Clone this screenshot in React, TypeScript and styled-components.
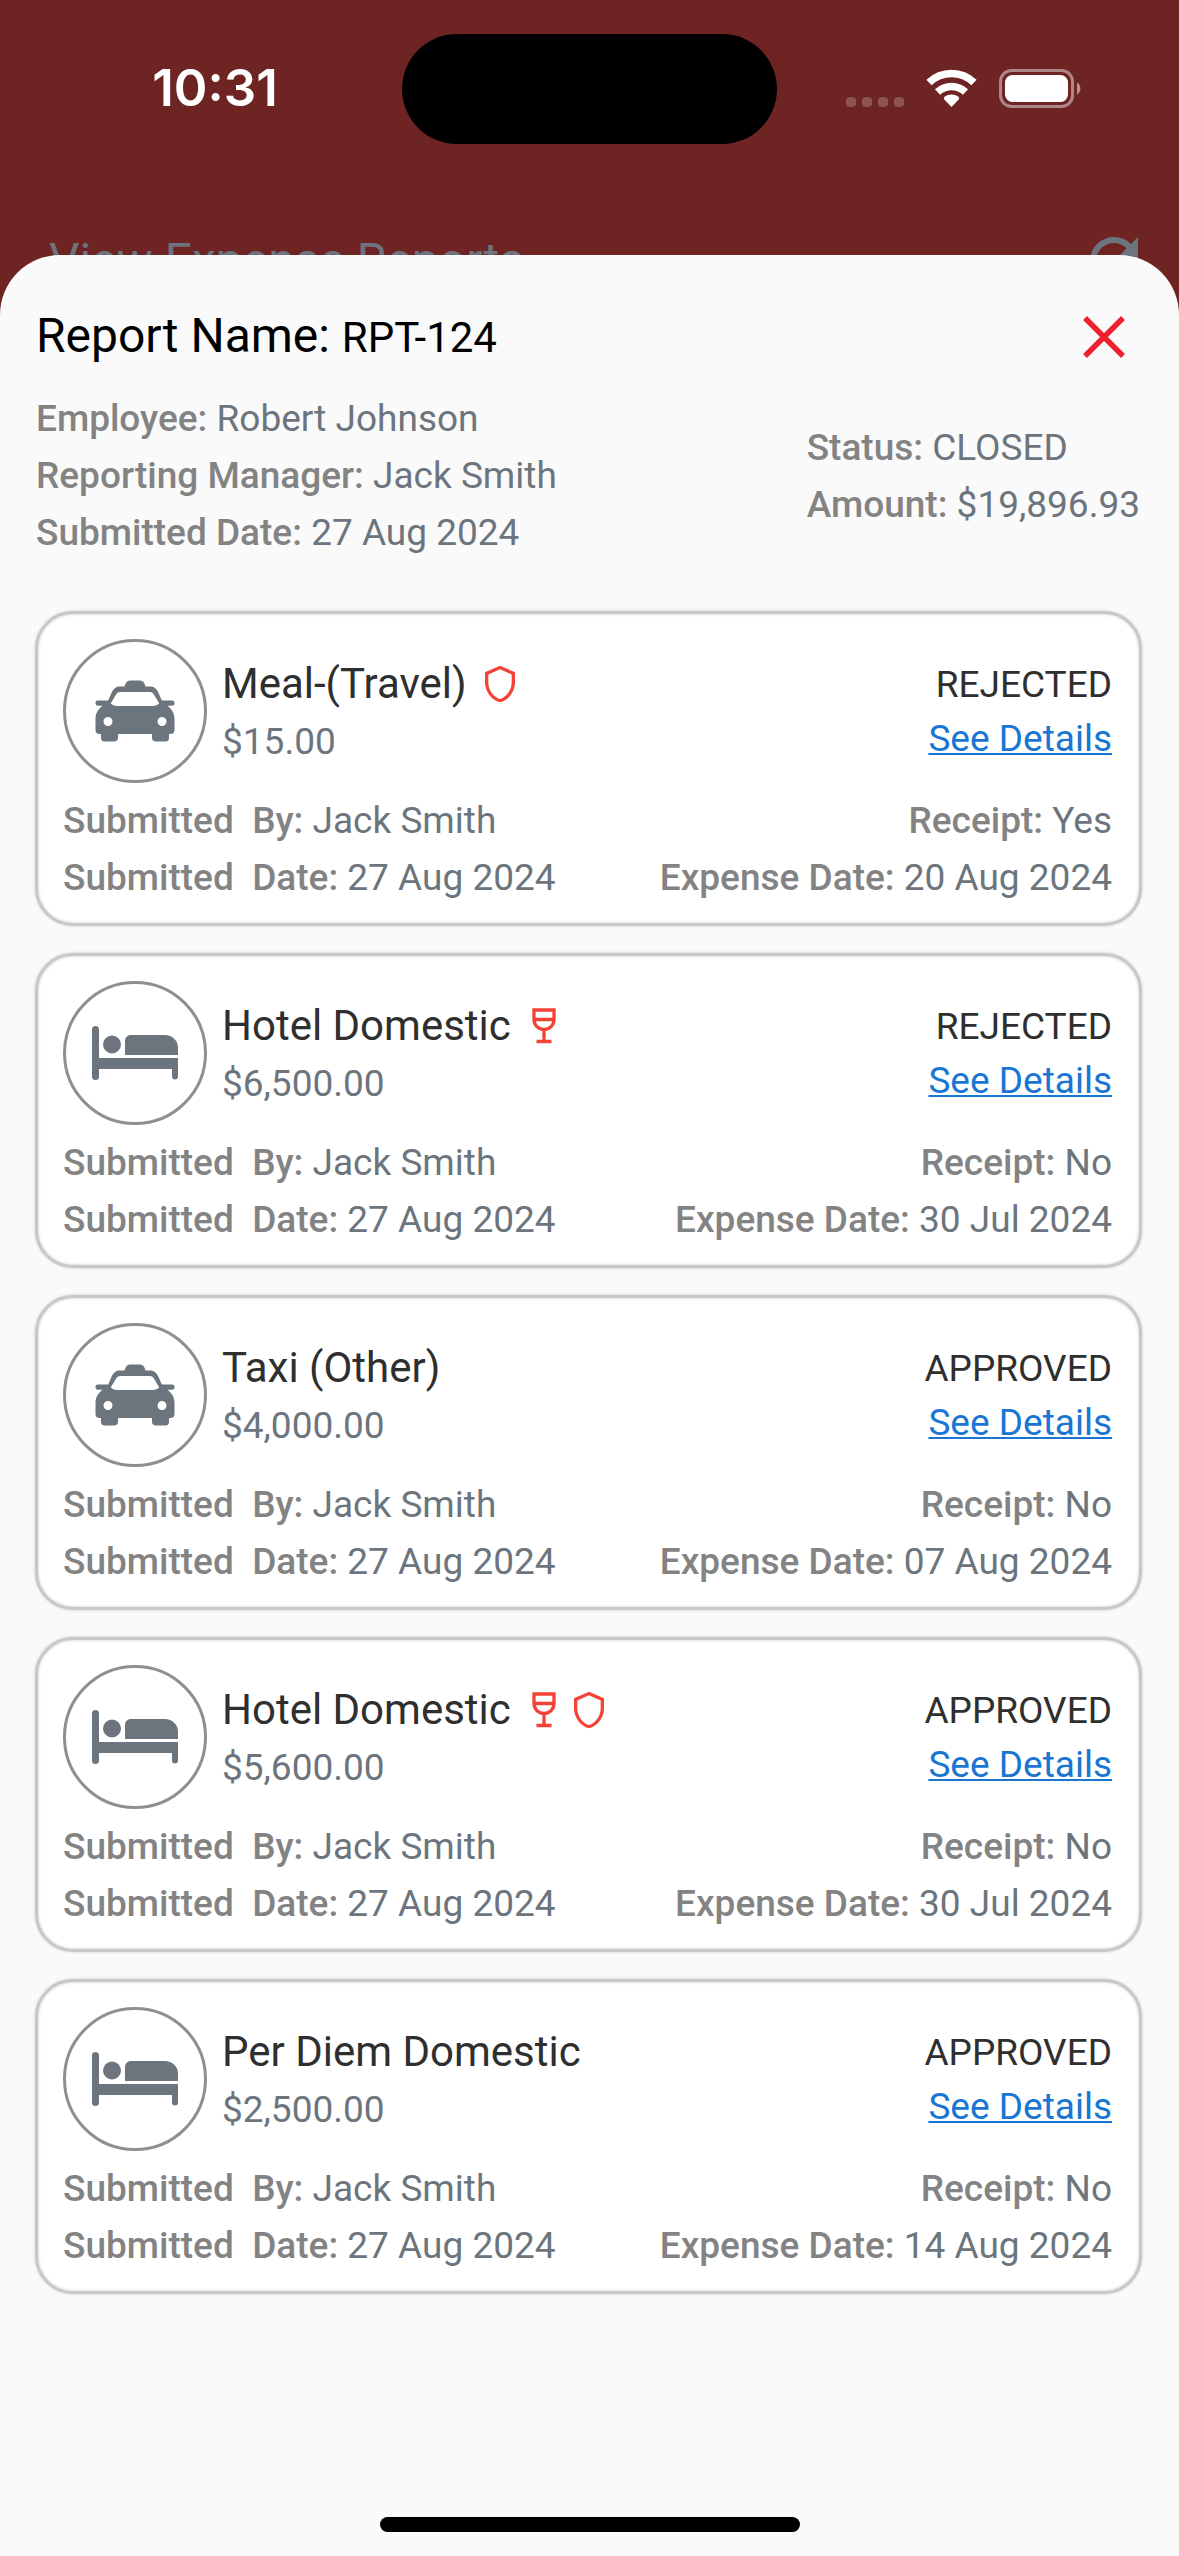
import React from "react";
import styled, { createGlobalStyle } from "styled-components";
import { MdRefresh } from "react-icons/md";

const GlobalStyle = createGlobalStyle`
  *, *::before, *::after { box-sizing: border-box; }
  body { margin: 0; background: #6e2423; font-family: Roboto, "Noto Sans", sans-serif; }
  h1, h2, h3, p, ul { margin: 0; padding: 0; font-weight: 400; }
`;

const Page = styled.div`
  min-height: 100vh;
  display: flex;
  flex-direction: column;
  background: #6e2423;
`;

const StatusBar = styled.div`
  display: grid;
  grid-template-columns: 1fr 375px 1fr;
  align-items: center;
  padding-top: 34px;
`;

const Clock = styled.time`
  padding: 0 0 2px 28px;
  text-align: center;
  font: 600 51px/56px Inter, "Liberation Sans", sans-serif;
  color: #fff;
`;

const Island = styled.div`
  height: 110px;
  border-radius: 55px;
  background: #000;
`;

const Indicators = styled.div`
  display: flex;
  justify-content: center;
  padding: 0 29px 2px 0;
`;

const AppBar = styled.header`
  display: flex;
  align-items: center;
  justify-content: space-between;
  height: 72px;
  margin-top: 81px;
  padding: 0 29px 0 49px;
  color: #6c757d;
`;

const AppTitle = styled.h1`
  font-size: 48px;
  line-height: 56px;
`;

const IconButton = styled.button`
  display: flex;
  padding: 0;
  border: 0;
  background: none;
  color: inherit;
  cursor: pointer;
`;

const Sheet = styled.main`
  position: relative;
  flex: 1;
  display: flex;
  flex-direction: column;
  margin-top: -42px;
  padding: 52px 35px 24px;
  border-radius: 60px 60px 0 0;
  background: #fafafa;
`;

const SheetHeader = styled.div`
  display: flex;
  align-items: center;
  justify-content: space-between;
  height: 60px;
  padding: 0 15px 0 1px;
`;

const ReportTitle = styled.h2`
  font-size: 48px;
  line-height: 60px;
  color: #000;
`;

const ReportId = styled.span`
  font-size: 42px;
`;

const Summary = styled.div`
  display: flex;
  align-items: center;
  justify-content: space-between;
  margin: 23px 0 50px;
  padding: 0 4px 0 1px;
`;

const Field = styled.p`
  font-size: 37px;
  line-height: 57px;
  color: #6c757d;
  white-space: pre;
`;

const Label = styled.span`
  font-weight: 500;
  color: #838383;
`;

const CardList = styled.ul`
  display: flex;
  flex-direction: column;
  gap: 27px;
  margin-right: 2px;
  list-style: none;
`;

const Card = styled.li`
  padding: 25px 27px 17px 25px;
  border: 3px solid #c8c8c8;
  border-radius: 38px;
  background: #fff;
  box-shadow: 0 0 3px #c8c8c8, inset 0 0 3px #c8c8c8;
`;

const CardTop = styled.div`
  display: flex;
  align-items: center;
  gap: 15px;
  margin-bottom: 9px;
`;

const Avatar = styled.div`
  display: flex;
  align-items: center;
  justify-content: center;
  width: 144px;
  height: 144px;
  border: 3px solid #8e8f92;
  border-radius: 50%;
  color: #6c757d;
`;

const Main = styled.div`
  flex: 1;
  padding-top: 2px;
`;

const TitleRow = styled.div`
  display: flex;
  align-items: center;
  gap: 5px;
`;

const CardTitle = styled.h3`
  margin-right: 8px;
  font-size: 42px;
  line-height: 60px;
  color: #2f2f2f;
`;

const Price = styled.p`
  font-size: 37px;
  line-height: 56px;
  color: #6c757d;
`;

const Side = styled.div`
  display: flex;
  flex-direction: column;
  align-items: flex-end;
  padding-top: 2px;
  font-size: 37px;
  line-height: 54px;
  color: #2f2f2f;
`;

const DetailsLink = styled.a`
  color: #1976d2;
  text-decoration: underline;
  text-decoration-thickness: 2px;
  text-decoration-skip-ink: none;
  text-underline-offset: 2px;
`;

const FieldRow = styled.div`
  display: flex;
  justify-content: space-between;
`;

const HomeIndicator = styled.div`
  width: 420px;
  height: 15px;
  margin: auto auto 0;
  border-radius: 8px;
  background: #000;
`;

const StatusIcons = () => (
  <svg width="235" height="39" viewBox="0 0 235 39" aria-hidden="true">
    <g fill="#fff" fillOpacity="0.22">
      {[0, 16, 32, 48].map((x) => (
        <rect key={x} x={x} y="28" width="10" height="10" rx="4" />
      ))}
    </g>
    <g fill="none" stroke="#fff">
      <path d="M83 13.5a32.500 32.500 0 0 1 45 0" strokeWidth="7.500" />
      <path d="M91.500 23a20.500 20.500 0 0 1 28 0" strokeWidth="7.500" />
    </g>
    <path d="M105.500 38l-7.200-7.600a2 2 0 0 1 .2-2.600 11.500 11.500 0 0 1 14 0 2 2 0 0 1 .2 2.600z" fill="#fff" />
    <rect x="154.500" y="1.500" width="72" height="36" rx="11" fill="none" stroke="#fff" strokeOpacity="0.45" strokeWidth="3" />
    <rect x="159" y="6" width="63" height="27" rx="7.500" fill="#fff" />
    <path d="M231 13.500a7 7 0 0 1 0 12z" fill="#fff" fillOpacity="0.5" />
  </svg>
);

const CloseIcon = () => (
  <svg width="50" height="50" viewBox="0 0 50 50" aria-hidden="true">
    <path d="M6 6l38 38M44 6L6 44" stroke="#ee2030" strokeWidth="5.500" />
  </svg>
);

const TaxiIcon = () => (
  <svg width="80" height="62" viewBox="0 0 80 62" fill="currentColor" aria-hidden="true">
    <path
      fillRule="evenodd"
      d="M29.500 6.500C30.500 2.500 32 .500 35 .500h10c3 0 4.500 2 5.500 6h4.500c4.500 0 7 2.500 9 7.500l2.800 6.500H77c1.600 0 2.500.8 2.500 2.500s-.9 2.700-2.500 2.700h-4.500c4 3 7 7.500 7 13V50c0 2.500-1.500 4-4 4h-1.500v4c0 2.500-1.500 3.500-3.500 3.500H61c-2.500 0-4-1.500-4-3.500v-4H23v4c0 2-1.500 3.500-4 3.500H9.500C7.500 61.500 6 60.500 6 58v-4H4.500c-2.500 0-4-1.500-4-4V38.700c0-5.500 3-10 7-13H3C1.400 25.700.5 24.700.5 23s.9-2.500 2.500-2.500h10.200L16 14c2-5 4.500-7.500 9-7.500zM25.500 12c-2.500 0-3.700 1-5 3.500l-4.500 7.500c-.8 1.500 4 3 6.500 3h35c2.500 0 7.300-1.500 6.500-3L59.500 15.500c-1.300-2.500-2.500-3.500-5-3.500zM13 37a4.500 4.500 0 1 0 0 9 4.500 4.500 0 0 0 0-9zm54 0a4.500 4.500 0 1 0 0 9 4.500 4.500 0 0 0 0-9z"
    />
  </svg>
);

const BedIcon = () => (
  <svg width="86" height="54" viewBox="0 0 86 54" fill="currentColor" aria-hidden="true">
    <path d="M0 3.500a3.500 3.500 0 0 1 7 0V32h79v18.500a3 3 0 0 1-6 0V43H7v7.500a3.500 3.500 0 0 1-7 0z" />
    <circle cx="20" cy="18.500" r="9" />
    <path d="M33 15c0-3.500 2.500-6 6-6h34c7 0 13 5.500 13 12.500v7.500H33z" />
  </svg>
);

const ShieldIcon = () => (
  <svg width="40" height="40" viewBox="0 0 24 24" fill="#f44336" role="img" aria-label="Policy violation">
    <path d="M21 11c0 5.550-3.840 10.740-9 12-5.160-1.260-9-6.450-9-12V5l9-4 9 4v6m-9 10c3.750-1 7-5.460 7-9.780V6.300l-7-3.120L5 6.300v4.920C5 15.540 8.250 20 12 21z" />
  </svg>
);

const WineIcon = () => (
  <svg width="40" height="40" viewBox="0 0 40 40" fill="none" stroke="#f44336" strokeWidth="3.300" role="img" aria-label="Alcohol">
    <path d="M10 4h20v9.500a10 10 0 0 1-20 0zM10 13.500h20M20 23.500V35M12.500 35.500h15" />
  </svg>
);

type Flag = "shield" | "wine";

interface Expense {
  title: string;
  amount: string;
  icon: "taxi" | "bed";
  flags: Flag[];
  status: "REJECTED" | "APPROVED";
  receipt: "Yes" | "No";
  date: string;
}

const expenses: Expense[] = [
  { title: "Meal-(Travel)", amount: "$15.00", icon: "taxi", flags: ["shield"], status: "REJECTED", receipt: "Yes", date: "20 Aug 2024" },
  { title: "Hotel Domestic", amount: "$6,500.00", icon: "bed", flags: ["wine"], status: "REJECTED", receipt: "No", date: "30 Jul 2024" },
  { title: "Taxi (Other)", amount: "$4,000.00", icon: "taxi", flags: [], status: "APPROVED", receipt: "No", date: "07 Aug 2024" },
  { title: "Hotel Domestic", amount: "$5,600.00", icon: "bed", flags: ["wine", "shield"], status: "APPROVED", receipt: "No", date: "30 Jul 2024" },
  { title: "Per Diem Domestic", amount: "$2,500.00", icon: "bed", flags: [], status: "APPROVED", receipt: "No", date: "14 Aug 2024" },
];

const LabeledField = ({ label, value }: { label: string; value: string }) => (
  <Field>
    <Label>{label}</Label> {value}
  </Field>
);

const ExpenseCard = ({ expense }: { expense: Expense }) => (
  <Card>
    <CardTop>
      <Avatar>{expense.icon === "taxi" ? <TaxiIcon /> : <BedIcon />}</Avatar>
      <Main>
        <TitleRow>
          <CardTitle>{expense.title}</CardTitle>
          {expense.flags.map((flag) => (flag === "wine" ? <WineIcon key={flag} /> : <ShieldIcon key={flag} />))}
        </TitleRow>
        <Price>{expense.amount}</Price>
      </Main>
      <Side>
        <span>{expense.status}</span>
        <DetailsLink href="#details">See Details</DetailsLink>
      </Side>
    </CardTop>
    <FieldRow>
      <LabeledField label="Submitted  By:" value="Jack Smith" />
      <LabeledField label="Receipt:" value={expense.receipt} />
    </FieldRow>
    <FieldRow>
      <LabeledField label="Submitted  Date:" value="27 Aug 2024" />
      <LabeledField label="Expense Date:" value={expense.date} />
    </FieldRow>
  </Card>
);

export default function App() {
  return (
    <Page>
      <GlobalStyle />
      <StatusBar>
        <Clock>10:31</Clock>
        <Island />
        <Indicators>
          <StatusIcons />
        </Indicators>
      </StatusBar>
      <AppBar>
        <AppTitle>View Expense Reports</AppTitle>
        <IconButton type="button" aria-label="Refresh">
          <MdRefresh size={72} />
        </IconButton>
      </AppBar>
      <Sheet>
        <SheetHeader>
          <ReportTitle>
            Report Name: <ReportId>RPT-124</ReportId>
          </ReportTitle>
          <IconButton type="button" aria-label="Close">
            <CloseIcon />
          </IconButton>
        </SheetHeader>
        <Summary>
          <div>
            <LabeledField label="Employee:" value="Robert Johnson" />
            <LabeledField label="Reporting Manager:" value="Jack Smith" />
            <LabeledField label="Submitted Date:" value="27 Aug 2024" />
          </div>
          <div>
            <LabeledField label="Status:" value="CLOSED" />
            <LabeledField label="Amount:" value="$19,896.93" />
          </div>
        </Summary>
        <CardList>
          {expenses.map((expense, i) => (
            <ExpenseCard key={i} expense={expense} />
          ))}
        </CardList>
        <HomeIndicator />
      </Sheet>
    </Page>
  );
}
